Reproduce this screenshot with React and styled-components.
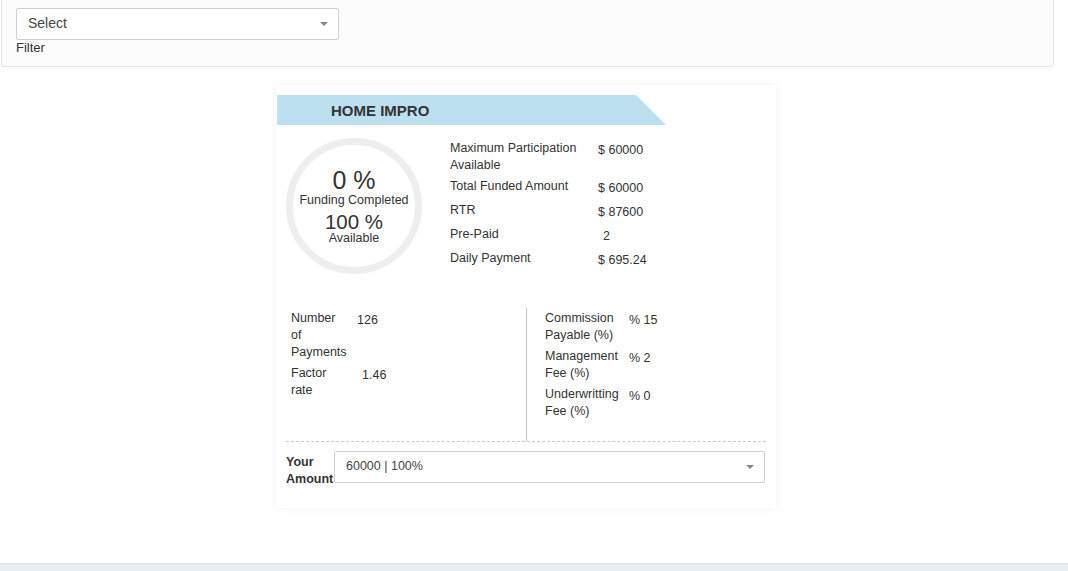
import React from 'react';
import styled, { createGlobalStyle } from 'styled-components';

const GlobalStyle = createGlobalStyle`
  body {
    margin: 0;
    background: #fff;
    font-family: "Liberation Sans", Arial, sans-serif;
    color: #333;
  }
`;

const Page = styled.div`
  width: 1053px;
  margin-left: 1px;
`;

const FilterPanel = styled.section`
  background: #fcfcfc;
  border: 1px solid #e6e6e6;
  border-top: none;
  border-radius: 0 0 4px 4px;
  padding: 8px 15px 11px 14px;
`;

const SelectBox = styled.div`
  display: flex;
  align-items: center;
  justify-content: space-between;
  box-sizing: border-box;
  height: 32px;
  width: ${p => p.$width || 'auto'};
  flex: ${p => (p.$grow ? 1 : 'none')};
  padding: 0 10px 3px 11px;
  background: #fff;
  border: 1px solid #d0d0d0;
  border-radius: 2px;
  font-size: ${p => p.$size || 14}px;
  color: #444;
`;

const Caret = styled.span`
  width: 0;
  height: 0;
  margin-top: 3px;
  border-left: 4px solid transparent;
  border-right: 4px solid transparent;
  border-top: 4px solid #888;
`;

const FilterLabel = styled.div`
  margin-top: 1px;
  font-size: 13px;
  line-height: 14px;
  color: #333;
`;

const CardArea = styled.div`
  display: flex;
  justify-content: center;
  padding: 18px 3px 0 0;
`;

const Card = styled.article`
  width: 500px;
  box-sizing: border-box;
  padding: 10px 0 20px;
  background: #fff;
  box-shadow: 0 0 8px rgba(0, 0, 0, 0.06);
`;

const Ribbon = styled.h3`
  margin: 0 0 0 1px;
  width: 389px;
  height: 30px;
  box-sizing: border-box;
  padding-left: 54px;
  display: flex;
  align-items: center;
  background: #bde0f1;
  clip-path: polygon(0 0, calc(100% - 30px) 0, 100% 100%, 0 100%);
  font-size: 15px;
  font-weight: bold;
  color: #333;
`;

const TopSection = styled.div`
  display: flex;
  align-items: flex-start;
  margin: 13px 10px 0;
`;

const Ring = styled.div`
  width: 136px;
  height: 136px;
  box-sizing: border-box;
  border: 7px solid #eeeeee;
  border-radius: 50%;
  display: flex;
  flex-direction: column;
  align-items: center;
  justify-content: center;
  text-align: center;
  color: #333;
`;

const Big = styled.div`
  font-size: ${p => p.$size}px;
  line-height: ${p => p.$lh}px;
  margin-top: ${p => p.$mt || 0}px;
`;

const Small = styled.div`
  font-size: 12.5px;
  line-height: ${p => p.$lh}px;
  margin-top: ${p => p.$mt || 0}px;
`;

const InfoGrid = styled.div`
  display: grid;
  grid-template-columns: ${p => p.$cols};
  margin-left: ${p => p.$ml || 0}px;
  align-content: start;
`;

const Label = styled.div`
  padding: 2px ${p => p.$pr || 0}px 2px 0;
  font-size: 12.5px;
  line-height: 17px;
  color: #333;
`;

const Value = styled.div`
  padding: 2px 0 2px ${p => p.$indent || 0}px;
  font-size: 12.5px;
  line-height: 20px;
  color: #333;
`;

const BottomSection = styled.div`
  display: flex;
  margin: 34px 10px 0;
  border-bottom: 1px dashed #c8c8c8;
`;

const Column = styled.div`
  width: ${p => p.$width};
  box-sizing: border-box;
  padding: 0 0 19px ${p => p.$pl}px;
  border-right: ${p => (p.$divider ? '1px solid #b9c8d3' : 'none')};
`;

const AmountRow = styled.div`
  display: flex;
  align-items: flex-start;
  margin: 9px 11px 0 10px;
`;

const AmountLabel = styled.div`
  width: 48px;
  padding-top: 3px;
  font-size: 12.5px;
  line-height: 17px;
  font-weight: bold;
  color: #333;
`;

const Footer = styled.div`
  margin-top: 55px;
  height: 8px;
  border-top: 1px solid #dfe4e9;
  background: #e8eef4;
`;

const topRows = [
  ['Maximum Participation Available', '$ 60000'],
  ['Total Funded Amount', '$ 60000'],
  ['RTR', '$ 87600'],
  ['Pre-Paid', '2', 5],
  ['Daily Payment', '$ 695.24'],
];

const leftRows = [
  ['Number of Payments', '126'],
  ['Factor rate', '1.46', 5],
];

const rightRows = [
  ['Commission Payable (%)', '% 15'],
  ['Management Fee (%)', '% 2'],
  ['Underwritting Fee (%)', '% 0'],
];

function Rows({ rows, pr }) {
  return rows.map(([label, value, indent]) => (
    <React.Fragment key={label}>
      <Label $pr={pr}>{label}</Label>
      <Value $indent={indent}>{value}</Value>
    </React.Fragment>
  ));
}

export default function App() {
  return (
    <>
      <GlobalStyle />
      <Page>
        <FilterPanel>
          <SelectBox $width="323px">
            Select
            <Caret />
          </SelectBox>
          <FilterLabel>Filter</FilterLabel>
        </FilterPanel>

        <CardArea>
          <Card>
            <Ribbon>HOME IMPRO</Ribbon>

            <TopSection>
              <Ring>
                <Big $size={25} $lh={24}>0 %</Big>
                <Small $lh={16}>Funding Completed</Small>
                <Big $size={20.5} $lh={18} $mt={5}>100 %</Big>
                <Small $lh={14}>Available</Small>
              </Ring>
              <InfoGrid $cols="148px auto" $ml={28}>
                <Rows rows={topRows} pr={8} />
              </InfoGrid>
            </TopSection>

            <BottomSection>
              <Column $width="241px" $pl={5} $divider>
                <InfoGrid $cols="66px auto">
                  <Rows rows={leftRows} pr={9} />
                </InfoGrid>
              </Column>
              <Column $width="239px" $pl={18}>
                <InfoGrid $cols="84px auto">
                  <Rows rows={rightRows} pr={3} />
                </InfoGrid>
              </Column>
            </BottomSection>

            <AmountRow>
              <AmountLabel>Your Amount</AmountLabel>
              <SelectBox $grow $size={12.5}>
                60000 | 100%
                <Caret />
              </SelectBox>
            </AmountRow>
          </Card>
        </CardArea>
      </Page>
      <Footer />
    </>
  );
}
